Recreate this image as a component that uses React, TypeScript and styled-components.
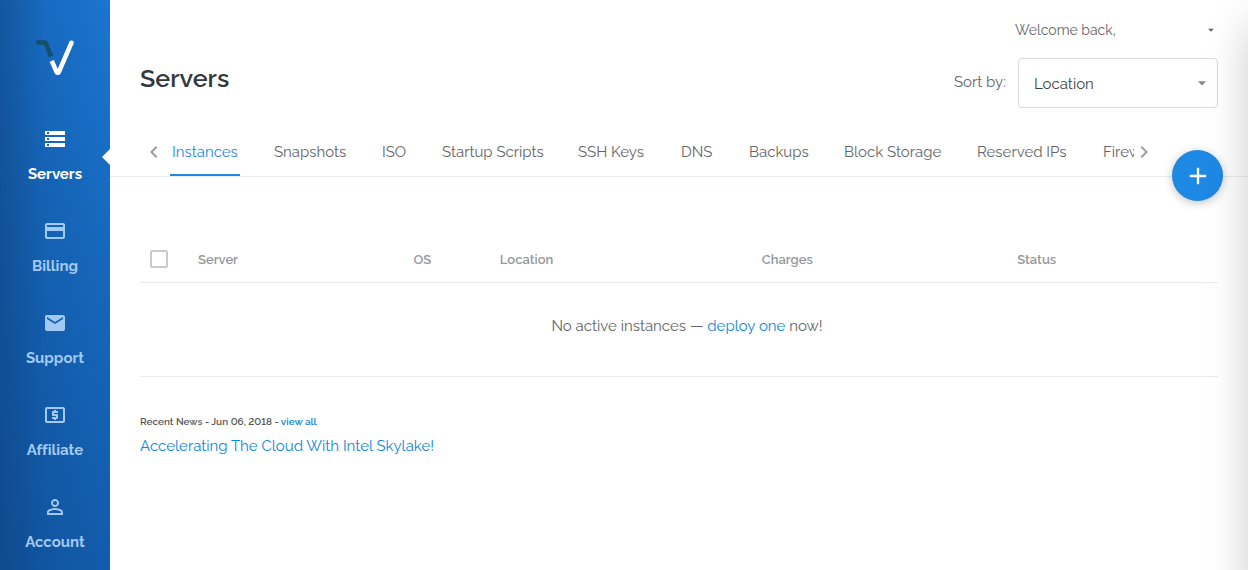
import React from 'react';
import styled, { createGlobalStyle } from 'styled-components';
import {
  MdAdd,
  MdArrowDropDown,
  MdChevronLeft,
  MdChevronRight,
  MdCreditCard,
  MdEmail,
  MdLocalAtm,
  MdPersonOutline,
  MdStorage,
} from 'react-icons/md';

const GlobalStyle = createGlobalStyle`
  *, *::before, *::after { box-sizing: border-box; }
  body {
    margin: 0;
    background: #fff;
    color: #646668;
    font-family: Raleway, Lato, "Open Sans", sans-serif;
    font-size: 15px;
    font-variant-ligatures: none;
    font-variant-numeric: lining-nums;
    line-height: 20px;
    overflow-x: hidden;
  }
  a { color: #0b87e0; text-decoration: none; }
  button, select { font: inherit; color: inherit; }
`;

const Page = styled.div`
  display: flex;
  min-height: 100vh;
`;

const Sidebar = styled.nav`
  flex: none;
  width: 110px;
  background:
    linear-gradient(90deg, rgba(16, 58, 108, 0.3), rgba(16, 58, 108, 0) 40%),
    linear-gradient(80deg, rgba(14, 74, 146, 0.8), rgba(14, 74, 146, 0.1)),
    linear-gradient(180deg, #1c7ad6, #166abf);
`;

const Logo = styled.a`
  display: flex;
  justify-content: center;
  height: 115px;
  padding-top: 40px;
`;

const NavList = styled.ul`
  display: grid;
  gap: 8px;
  margin: 0;
  padding: 0;
  list-style: none;
`;

const NavLink = styled.a<{ $active?: boolean }>`
  position: relative;
  display: flex;
  flex-direction: column;
  align-items: center;
  gap: 13px;
  height: 84px;
  padding-top: 12px;
  color: ${(p) => (p.$active ? '#fff' : '#a2c9f1')};
  font-weight: 700;

  &::after {
    content: '';
    display: ${(p) => (p.$active ? 'block' : 'none')};
    position: absolute;
    right: 0;
    top: 34px;
    border: 8px solid transparent;
    border-left: 0;
    border-right-color: #fff;
  }
`;

const Main = styled.main`
  flex: 1;
  min-width: 0;
`;

const Header = styled.header`
  display: flex;
  justify-content: space-between;
  padding: 20px 30px 0;
`;

const Title = styled.h1`
  margin: 42px 0 0;
  color: #33383c;
  font-size: 25px;
  font-weight: 600;
  line-height: 32px;
`;

const Tools = styled.div`
  display: flex;
  flex-direction: column;
  align-items: flex-end;
  gap: 18px;
`;

const AccountMenu = styled.button`
  display: flex;
  align-items: center;
  justify-content: space-between;
  width: 203px;
  height: 20px;
  padding: 0;
  border: 0;
  background: none;
  font-size: 14px;
`;

const SortBy = styled.div`
  display: flex;
  align-items: center;
  gap: 12px;
`;

const SortLabel = styled.label`
  padding-bottom: 2px;
`;

const SelectBox = styled.div`
  position: relative;
  display: flex;
  width: 200px;
`;

const Select = styled.select`
  width: 100%;
  height: 50px;
  padding: 2px 36px 0 15px;
  border: 1px solid #d9dadc;
  border-radius: 4px;
  background: #fff;
  color: #404346;
  appearance: none;
`;

const SelectArrow = styled(MdArrowDropDown)`
  position: absolute;
  top: 15px;
  right: 6px;
  color: #88898b;
  pointer-events: none;
`;

const TabBar = styled.div`
  position: relative;
  display: flex;
  align-items: stretch;
  height: 49px;
  margin-top: 20px;
  padding: 0 94px 0 34px;
  border-bottom: 1px solid #e9ecef;
`;

const ScrollButton = styled.button`
  display: flex;
  flex: none;
  align-items: center;
  justify-content: center;
  width: 20px;
  padding: 0;
  border: 0;
  background: none;
  color: #9b9da0;

  svg { flex: none; }
`;

const Tabs = styled.div`
  display: flex;
  flex: 1;
  gap: 32px;
  min-width: 0;
  margin-left: 6px;
  overflow: hidden;
`;

const Tab = styled.a<{ $active?: boolean; $width: number }>`
  flex: none;
  width: ${(p) => p.$width}px;
  padding: 14px 2px 0;
  border-bottom: 2px solid ${(p) => (p.$active ? '#1e88e5' : 'transparent')};
  color: ${(p) => (p.$active ? '#1e88e5' : '#646668')};
  white-space: nowrap;
`;

const AddButton = styled.button`
  position: absolute;
  right: 25px;
  bottom: -25px;
  display: flex;
  align-items: center;
  justify-content: center;
  width: 51px;
  height: 51px;
  padding: 0;
  border: 0;
  border-radius: 50%;
  background: #1e88e5;
  color: #fff;
  box-shadow: 0 2px 10px rgba(0, 0, 0, 0.24);
`;

const Content = styled.div`
  padding: 60px 30px 0;
`;

const Table = styled.table`
  width: 100%;
  border-collapse: collapse;
  table-layout: fixed;
`;

const HeadCell = styled.th<{ $width?: string }>`
  width: ${(p) => p.$width ?? 'auto'};
  height: 45px;
  padding: 2px 0 0;
  border-bottom: 1px solid #e9ebef;
  color: #94989c;
  font-size: 13px;
  font-weight: 600;
  text-align: left;

  &:first-child { padding: 0; }
`;

const Checkbox = styled.input`
  display: block;
  width: 18px;
  height: 18px;
  margin: 0 0 0 10px;
  border: 2px solid #c8cbce;
  border-radius: 2px;
  background: #fff;
  appearance: none;
`;

const EmptyCell = styled.td`
  height: 94px;
  padding: 0 0 6px 16px;
  border-bottom: 1px solid #e9ebed;
  text-align: center;
`;

const News = styled.section`
  margin-top: 37px;
`;

const NewsMeta = styled.p`
  margin: 0;
  color: #55585b;
  font-size: 10px;
  font-weight: 600;
  line-height: 16px;
`;

const NewsTitle = styled.a`
  display: inline-block;
  margin-top: 6px;
`;

const Drawer = styled.aside`
  position: fixed;
  top: 24px;
  bottom: -40px;
  left: 100%;
  width: 300px;
  box-shadow: 0 0 40px rgba(0, 0, 0, 0.2);
`;

const navItems = [
  { label: 'Servers', icon: MdStorage, active: true },
  { label: 'Billing', icon: MdCreditCard },
  { label: 'Support', icon: MdEmail },
  { label: 'Affiliate', icon: MdLocalAtm },
  { label: 'Account', icon: MdPersonOutline },
];

const tabs = [
  { label: 'Instances', width: 70 },
  { label: 'Snapshots', width: 76 },
  { label: 'ISO', width: 28 },
  { label: 'Startup Scripts', width: 104 },
  { label: 'SSH Keys', width: 71 },
  { label: 'DNS', width: 36 },
  { label: 'Backups', width: 63 },
  { label: 'Block Storage', width: 101 },
  { label: 'Reserved IPs', width: 94 },
  { label: 'Firewall', width: 60 },
];

const columns = [
  { label: 'Server', width: '20%' },
  { label: 'OS', width: '8%' },
  { label: 'Location', width: '24.3%' },
  { label: 'Charges', width: '23.7%' },
  { label: 'Status' },
];

export default function App() {
  return (
    <>
      <GlobalStyle />
      <Page>
        <Sidebar>
          <Logo href="#" aria-label="Home">
            <svg width="40" height="37" viewBox="0 0 40 37" fill="none" strokeLinejoin="round">
              <path d="M3 2.5h6.5q1 0 1.4 1L16 16.5" stroke="#144f6c" strokeWidth="4.6" />
              <circle cx="3" cy="2.5" r="2.3" fill="#144f6c" />
              <path d="m16.8 20.8 4.7 11.1c.5 1.2 1.8 1.2 2.4 0L36.5 2.7" stroke="#fff" strokeWidth="4.6" />
              <circle cx="36.5" cy="2.7" r="2.3" fill="#fff" />
            </svg>
          </Logo>
          <NavList>
            {navItems.map(({ label, icon: Icon, active }) => (
              <li key={label}>
                <NavLink href="#" $active={active}>
                  <Icon size={24} />
                  {label}
                </NavLink>
              </li>
            ))}
          </NavList>
        </Sidebar>
        <Main>
          <Header>
            <Title>Servers</Title>
            <Tools>
              <AccountMenu type="button">
                Welcome back,
                <MdArrowDropDown size={14} />
              </AccountMenu>
              <SortBy>
                <SortLabel htmlFor="sort">Sort by:</SortLabel>
                <SelectBox>
                  <Select id="sort">
                    <option>Location</option>
                  </Select>
                  <SelectArrow size={20} />
                </SelectBox>
              </SortBy>
            </Tools>
          </Header>
          <TabBar>
            <ScrollButton type="button" aria-label="Previous tabs">
              <MdChevronLeft size={24} />
            </ScrollButton>
            <Tabs>
              {tabs.map(({ label, width }, i) => (
                <Tab key={label} href="#" $active={i === 0} $width={width}>
                  {label}
                </Tab>
              ))}
            </Tabs>
            <ScrollButton type="button" aria-label="Next tabs">
              <MdChevronRight size={24} />
            </ScrollButton>
            <AddButton type="button" aria-label="Deploy server">
              <MdAdd size={28} />
            </AddButton>
          </TabBar>
          <Content>
            <Table>
              <thead>
                <tr>
                  <HeadCell $width="58px">
                    <Checkbox type="checkbox" aria-label="Select all" />
                  </HeadCell>
                  {columns.map(({ label, width }) => (
                    <HeadCell key={label} $width={width}>
                      {label}
                    </HeadCell>
                  ))}
                </tr>
              </thead>
              <tbody>
                <tr>
                  <EmptyCell colSpan={6}>
                    No active instances — <a href="#">deploy one</a> now!
                  </EmptyCell>
                </tr>
              </tbody>
            </Table>
            <News>
              <NewsMeta>
                Recent News - Jun 06, 2018 - <a href="#">view all</a>
              </NewsMeta>
              <NewsTitle href="#">Accelerating The Cloud With Intel Skylake!</NewsTitle>
            </News>
          </Content>
        </Main>
      </Page>
      <Drawer />
    </>
  );
}
